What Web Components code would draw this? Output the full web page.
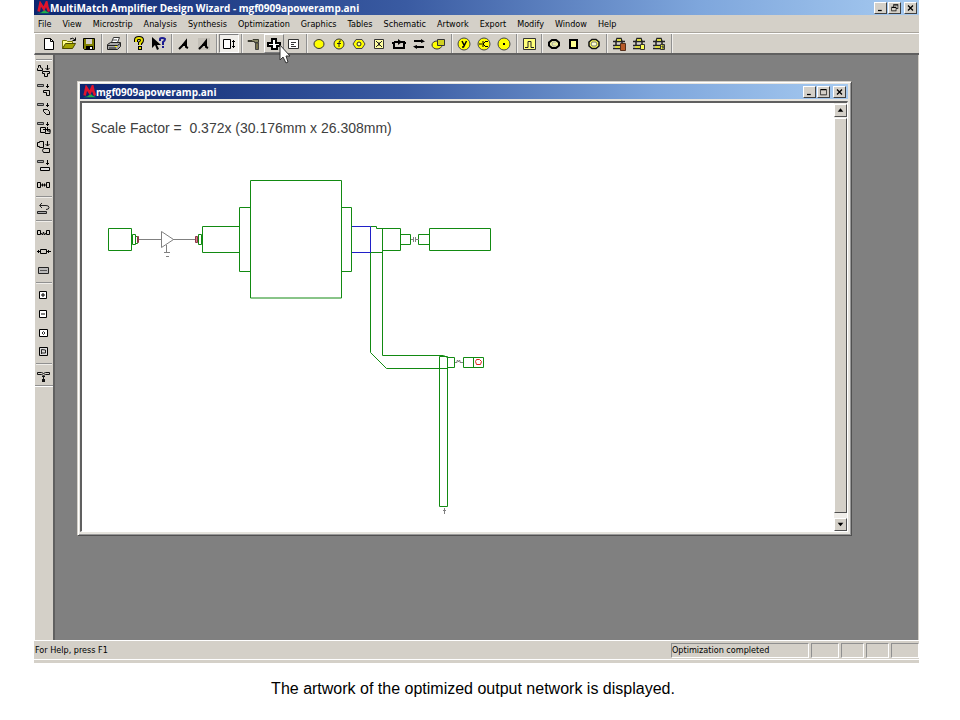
<!DOCTYPE html>
<html lang="en">
<head>
<meta charset="utf-8">
<title>MultiMatch Amplifier Design Wizard</title>
<style>
  body {
    margin: 0;
    background: #fff;
    color: #000;
    font-family: "DejaVu Sans Condensed", "DejaVu Sans", sans-serif;
    font-size: 9px;
  }
</style>
</head>
<body>
<design-wizard></design-wizard>

<script>
const ICONS = {
  logo: `<path d="M1 14l5-1 4-3 2 2 4 2z" fill="#1fb04a"/><path d="M3 12L5 3l4 6 3-7 1 5 2 5" fill="none" stroke="#e0142c" stroke-width="3"/>`,
  file: `<path d="M3.500 2.500h6l3 3v8h-9z" fill="#fff" stroke="#000"/><path d="M9.500 2.500v3h3" fill="none" stroke="#000"/>`,
  open: `<path d="M1.500 12.500v-8h4l1 1h5v2" fill="#ffff8c" stroke="#7a7a00"/><path d="M1.500 12.500l3-5h10l-3 5z" fill="#a5a500" stroke="#4a4a00"/><path d="M9 3q3-2 5 1M14.500 1.500v3h-3" fill="none" stroke="#000"/>`,
  save: `<path d="M2.500 2.500h11v11h-10l-1-1z" fill="#808000" stroke="#000"/><path d="M5 3h6v5H5z" fill="#d4d0c8"/><path d="M5 10h7v4H5z" fill="#000"/><path d="M9 11h2v2H9z" fill="#fff"/>`,
  print: `<path d="M5.500 6.500l2-5h6l-2 5z" fill="#fff" stroke="#333"/><path d="M7 4h4" stroke="#555"/><path d="M1.500 8.500l3-2h10v4l-3 3h-10z" fill="#a8a8a8" stroke="#222"/><path d="M2 9.500h9.500l2.500-2M3 12h7" fill="none" stroke="#222"/><path d="M9 10h2v1H9z" fill="#ff0"/>`,
  help: `<path d="M5 6V4q0-2 3-2t3 2q0 2-2 3v2" fill="none" stroke="#000" stroke-width="4"/><path d="M7 10h4v4H7z" fill="#000"/><path d="M5 6V4q0-2 3-2t3 2q0 2-2 3v2" fill="none" stroke="#e8e000" stroke-width="2"/><path d="M8 11h2v2H8z" fill="#e8e000"/>`,
  pointer: `<path d="M1 1v11l3-3 2 5 2-1-2-4h4z" fill="#000"/><path d="M9 5V3q0-1 2-1t3 1q0 2-2 3v3M12 10v2" fill="none" stroke="#1c1c90" stroke-width="2"/>`,
  analyse: `<path d="M3 13l3-3 4-5v6l2 1M6 9h5" fill="none" stroke="#000" stroke-width="2"/>`,
  analyseAll: `<path d="M2 2h12v12H2z" fill="#c4c0b8"/><path d="M3 13l3-3 4-5v6l2 1M6 9h5" fill="none" stroke="#000" stroke-width="2"/>`,
  sizing: `<path d="M2.500 3.500h7v9h-7z" fill="#fff" stroke="#000"/><path d="M12.500 4v8M11 5.500h3M11 10.500h3" stroke="#000"/>`,
  hammer: `<path d="M2 4.500h4l1-1h5.500v3h-4v-1H2z" fill="#8a8a68" stroke="#3a3a30"/><path d="M9.500 7h3v6.500h-3z" fill="#77734d" stroke="#444"/>`,
  plus: `<path d="M6 3h4v4h4v3h-3v3H6v-3H2V7h4z" fill="#fff" stroke="#000" stroke-width="2"/>`,
  list: `<path d="M2.500 3.500h10v9h-10z" fill="#fff" stroke="#333"/><path d="M5 6.500h5M5 8.500h3M5 10.500h5" stroke="#333"/>`,
  oval: `<ellipse cx="8" cy="8" rx="5" ry="4.500" fill="#ff0" stroke="#333"/>`,
  ovalF: `<circle cx="8" cy="8" r="5" fill="#ff0" stroke="#333"/><path d="M10 5q-2-1-2 2v4M6 7.500h4" fill="none" stroke="#222"/>`,
  ovalO: `<path d="M5 3.500h6l3 4.500-3 4.500H5L2 8z" fill="#ff0" stroke="#444"/><circle cx="8" cy="8" r="2" fill="#ffa" stroke="#222"/>`,
  crossBox: `<path d="M3.500 3.500h9v9h-9z" fill="#ffffa0" stroke="#333"/><path d="M5 5l6 6M11 5l-6 6M8 6v4" stroke="#222"/>`,
  bracket: `<path d="M3 6v6h10V6H3M1 7h2M13 7h2" fill="none" stroke="#000" stroke-width="2"/><path d="M7 3l4 3-4 3z" fill="#000"/>`,
  swap: `<path d="M3 5h9M4 11h9" stroke="#000" stroke-width="2"/><path d="M10 3l4 2.500L10 7zM6 9l-4 1.500L6 13z" fill="#000"/>`,
  stack: `<ellipse cx="6" cy="9" rx="5" ry="4" fill="#ff0" stroke="#333"/><path d="M6.500 3.500h7v6h-7z" fill="#d0d020" stroke="#333"/>`,
  ovalY: `<circle cx="8" cy="8" r="6" fill="#ff0" stroke="#444"/><path d="M6 5l2 4M10.500 5l-3 6H6" stroke="#000" stroke-width="1.500" fill="none"/>`,
  ovalK: `<circle cx="8" cy="8" r="6" fill="#ff0" stroke="#444"/><path d="M3 8h3M10 5L7 8l3 3M7 5v6M10 5.500h2M10 10.500h2" stroke="#000" fill="none"/>`,
  ovalDot: `<circle cx="8" cy="8" r="6" fill="#ff0" stroke="#444"/><path d="M7 7h2v2H7z" fill="#000"/>`,
  pulse: `<path d="M2.500 2.500h12v11h-12z" fill="#ffff78" stroke="#333"/><path d="M4 11.500h3v-6h3v6h3" fill="none" stroke="#222"/>`,
  ringC: `<path d="M6 4h4l3 2.500v3L10 12H6L3 9.500v-3z" fill="#eef0a0" stroke="#000" stroke-width="2"/><path d="M10 6q-4-1-4 2t4 2" fill="none" stroke="#aaa"/>`,
  ringBox: `<path d="M4 4h7v8H4z" fill="#ffff90" stroke="#000" stroke-width="2"/>`,
  ringO: `<path d="M6 3.500h4l3 2.500v4l-3 2.500H6L3 10V6z" fill="#ff5" stroke="#111" stroke-width="1.500"/><path d="M6 6h4l1 2-1 2H6L5 8z" fill="#ffc" stroke="#777"/>`,
  chipA: `<path d="M5 5.500l1-3h4l1 3M2 5.500h12M5 6v3M11 6v2M2 9.500h7M2 12.500h7" fill="none" stroke="#222" stroke-width="1.500"/><path d="M6 3h4v2H6zM4 10h5v2H4z" fill="#d8d840"/><path d="M9.500 7.500h5v7h-5z" fill="#b85a28" stroke="#55301c"/>`,
  chipB: `<path d="M5 5.500l1-3h4l1 3M2 5.500h12M5 6v3M11 6v2M2 9.500h7M2 12.500h7" fill="none" stroke="#222" stroke-width="1.500"/><path d="M6 3h4v2H6zM4 10h5v2H4z" fill="#d8d840"/><path d="M9.500 8.500h4v5h-4z" fill="#ff5" stroke="#333"/>`,
  chipC: `<path d="M5 5.500l1-3h4l1 3M2 5.500h12M5 6v3M11 6v2M2 9.500h7M2 12.500h7" fill="none" stroke="#222" stroke-width="1.500"/><path d="M6 3h4v2H6zM4 10h5v2H4z" fill="#d8d840"/><path d="M9.500 8.500h4v5h-4z" fill="#ee3" stroke="#333"/><path d="M13 10h-2v1h2v1h-2" fill="none" stroke="#444"/>`,

  addStub: `<path d="M1.500 7.500v-2l1-1v-2h2v2l2 1v2z" fill="none" stroke="#000"/><path d="M11.500 2v5M9.500 5l2 2 2-2M6.500 8.500h7v2h-2v3h-3v-3h-2z" fill="none" stroke="#000"/>`,
  addBend: `<path d="M1.500 2.500h6v2h-6z" fill="#aaa" stroke="#333"/><path d="M11.500 2v4M10 4.500h3M7.500 8.500h6v5h-3v-3h-3z" fill="none" stroke="#000"/>`,
  addCurve: `<path d="M1.500 2.500h6v2h-6z" fill="#aaa" stroke="#333"/><path d="M11.500 2v4M10 4.500h3M7.500 8.500h4l2 2v3h-3l-3-3z" fill="none" stroke="#000"/>`,
  addStep: `<path d="M1.500 2.500h6v2h-6z" fill="#aaa" stroke="#333"/><path d="M11.500 2v4M10 4.500h3M4.500 7.500h5v5h-5zM7 9.500h7v4H9M11.500 7v4h3" fill="none" stroke="#000"/>`,
  addTee: `<path d="M3.500 2.500h4v6h-4v-1h-2v-4h2zM7.500 9.500l-1 2 1 2h6v-4z" fill="none" stroke="#000"/><path d="M11.500 2v5M9.500 5l2 2 2-2" fill="none" stroke="#000"/>`,
  addLine: `<path d="M1.500 2.500h6v2h-6z" fill="#aaa" stroke="#333"/><path d="M11.500 2v5M10 5.500h3" stroke="#000"/><path d="M4.500 9.500h9v3h-9z" fill="#ddd" stroke="#000"/>`,
  link: `<path d="M1.500 5.500h3v5h-3zM10.500 5.500h3v5h-3zM5 8h5M6.500 6.500v3M8.500 6.500v3" fill="none" stroke="#000"/>`,
  undo: `<path d="M4 4.500h6q3 0 3 2t-3 2M6 2L3.500 4.500 6 7" fill="none" stroke="#222"/><path d="M1.500 10.500h9v2h-9z" fill="#aaa" stroke="#222"/>`,
  coil: `<path d="M1.500 5.500h3v4h-3zM10.500 5.500h3v4h-3zM5 8l1.500 2L7.500 7l1 3L10 8" fill="none" stroke="#000"/>`,
  insert: `<path d="M1 7.500h4M11 7.500h4M2.500 6v3M12.500 6v3M4.500 5.500h6v4h-6z" fill="none" stroke="#000"/>`,
  strip: `<path d="M2.500 4.500h10v6h-10z" fill="#bbb" stroke="#222"/><path d="M4 7.500h7" stroke="#555"/>`,
  boxPlus: `<path d="M3.500 4.500h7v7h-7z" fill="#fff" stroke="#000"/><path d="M5 8h4M7 6v4" stroke="#000"/>`,
  boxMinus: `<path d="M3.500 4.500h7v7h-7z" fill="#fff" stroke="#000"/><path d="M5 8h4" stroke="#000"/>`,
  boxDot: `<path d="M3.500 4.500h8v7h-8z" fill="#fff" stroke="#000"/><path d="M6 8l1.500-1.500L9 8 7.500 9.500z" fill="none" stroke="#333"/>`,
  boxFlag: `<path d="M3.500 3.500h8v8h-8z" fill="#ddd" stroke="#000"/><path d="M5.500 10V5.500l4 .5v3H6" fill="none" stroke="#222"/>`,
  pin: `<path d="M1.500 4.500h4l2 1 2-1h4v2h-4l-2 1-2-1h-4zM7.500 8v5M6 8.500h3M6 11.500h3" fill="none" stroke="#111"/><path d="M6 12h3v2H6z" fill="#111"/>`,

  minimize: `<path d="M4 11h6v2H4z"/>`,
  maximize: `<path d="M3 3h10v10H3zM4 5v7h8V5z" fill-rule="evenodd"/>`,
  restore: `<path d="M6 2h8v7h-3v4H3V6h3zM7 4v2h4v2h2V4zM4 8v4h6V8z" fill-rule="evenodd"/>`,
  close: `<path d="M4 4l8 8M12 4l-8 8" stroke="#000" stroke-width="2"/>`,
  up: `<path d="M8 4l5 6H3z"/>`,
  down: `<path d="M8 11l5-6H3z"/>`,
};

const icon = (name) => `<svg viewBox="0 0 16 16" aria-hidden="true">${ICONS[name]}</svg>`;

const MENUS = ["File", "View", "Microstrip", "Analysis", "Synthesis", "Optimization", "Graphics",
  "Tables", "Schematic", "Artwork", "Export", "Modify", "Window", "Help"];

// "|" stands for a separator
const MAIN_TOOLS = ["file", "open", "save", "|", "print", "|", "help", "pointer", "|", "analyse", "analyseAll",
  "|", "sizing", "|", "hammer", "plus", "list", "|", "oval", "ovalF", "ovalO", "crossBox", "bracket", "swap",
  "stack", "|", "ovalY", "ovalK", "ovalDot", "|", "pulse", "|", "ringC", "ringBox", "ringO", "|", "chipA",
  "chipB", "chipC", "|"];
const SIDE_TOOLS = ["addStub", "addBend", "addCurve", "addStep", "addTee", "addLine", "link", "|", "undo", "|",
  "coil", "insert", "strip", "|", "boxPlus", "boxMinus", "boxDot", "boxFlag", "|", "pin"];

class BaseElement extends HTMLElement {
  connectedCallback() {
    if (this.shadowRoot) return;
    this.attachShadow({ mode: "open" });
    this.shadowRoot.innerHTML = `
      <style>
        *, *::before, *::after { box-sizing: border-box; }
        :host { box-sizing: border-box; }
        button { font: inherit; color: inherit; border: 0; padding: 0; margin: 0; background: none; }
        svg { display: block; }
      </style>
      ${this.render()}`;
  }
}

class TitleBar extends BaseElement {
  render() {
    const middle = this.getAttribute("middle");
    return `
      <style>
        :host {
          display: flex;
          align-items: center;
          height: 15px;
          padding: 0 2px;
          background: linear-gradient(90deg, #0c2670, #3a5ba2 42%, #7ea6dc 75%, #a6caf0);
          color: #fff;
          font: bold 10px/14px "Open Sans", "Noto Sans", sans-serif;
        }
        .logo { width: 14px; height: 14px; flex: none; }
        .text { flex: 1; white-space: nowrap; overflow: hidden; }
        .buttons { display: flex; gap: 1px; }
        .buttons button {
          width: 13px;
          height: 12px;
          display: grid;
          place-items: center;
          background: #d4d0c8;
          border: 1px solid;
          border-color: #fff #404040 #404040 #fff;
        }
        .buttons button:last-child { margin-left: 2px; }
        .buttons svg { width: 11px; height: 10px; }
      </style>
      <svg class="logo" viewBox="0 0 16 16" aria-hidden="true">${ICONS.logo}</svg>
      <span class="text"><slot></slot></span>
      <span class="buttons">
        <button aria-label="Minimize">${icon("minimize")}</button>
        <button aria-label="${middle}">${icon(middle)}</button>
        <button aria-label="Close">${icon("close")}</button>
      </span>`;
  }
}

class MenuBar extends BaseElement {
  render() {
    return `
      <style>
        :host {
          display: flex;
          gap: 11px;
          height: 18px;
          padding: 0 4px;
          background: #d4d0c8;
          border-bottom: 1px solid #a8a49c;
        }
      </style>
      ${MENUS.map((m) => `<button>${m}</button>`).join("")}`;
  }
}

class ToolButton extends BaseElement {
  render() {
    return `
      <style>
        :host { display: block; width: 20px; height: 19px; flex: none; }
        button { width: 100%; height: 100%; display: flex; align-items: center; justify-content: center; }
        svg { width: 16px; height: 16px; flex: none; }
        :host([state]) button { border: 1px solid; }
        :host([state="pressed"]) button { background: #f0eeea; border-color: #808080 #fff #fff #808080; }
        :host([state="hover"]) button { border-color: #fff #808080 #808080 #fff; }
      </style>
      <button aria-label="${this.getAttribute("icon")}">${icon(this.getAttribute("icon"))}</button>`;
  }
}

class ToolBar extends BaseElement {
  render() {
    const side = this.hasAttribute("vertical");
    const states = { sizing: "pressed", plus: "hover" };
    const tools = (side ? SIDE_TOOLS : MAIN_TOOLS).map((t) => {
      if (t === "|") return `<i></i>`;
      const state = states[t] ? `state="${states[t]}"` : "";
      const button = `<tool-button icon="${t}" ${state}></tool-button>`;
      return t === "plus" ? `<span class="hot">${button}<mouse-cursor></mouse-cursor></span>` : button;
    });
    return `
      <style>
        :host {
          display: flex;
          align-items: center;
          height: 22px;
          padding-left: 4px;
          background: #d4d0c8;
          border-top: 1px solid #fff;
          border-bottom: 2px solid #606060;
          border-left: 1px solid #fff;
        }
        i { width: 5px; height: 19px; flex: none; display: grid; place-items: center; }
        i::before { content: ""; width: 2px; height: 100%; border-left: 1px solid #909090; border-right: 1px solid #f0eeea; }
        .hot { position: relative; }
        mouse-cursor { position: absolute; left: 15px; top: 10px; z-index: 2; }
        :host([vertical]) {
          flex-direction: column;
          width: 21px;
          height: auto;
          padding: 4px 0 0;
          border-top: 0;
          border-bottom: 0;
          border-right: 2px solid #606060;
        }
        :host([vertical])::before { content: ""; width: 16px; height: 2px; border-top: 1px solid #909090; background: #fff; }
        :host([vertical]) i { width: 16px; height: 5px; }
        :host([vertical]) i::before { width: 100%; height: 2px; border: 0; border-top: 1px solid #909090; background: #f0eeea; }
        .end { width: 18px; height: 2px; border-top: 1px solid #909090; background: #fff; }
      </style>
      ${tools.join("")}
      ${side ? `<div class="end"></div>` : ""}`;
  }
}

class MouseCursor extends BaseElement {
  render() {
    return `
      <style>:host { display: block; } svg { width: 12px; height: 20px; }</style>
      <svg viewBox="0 0 12 20" aria-hidden="true">
        <path d="M1 1v15l3-3 3 6 2-1-2-6h4z" fill="#fff" stroke="#333"/>
      </svg>`;
  }
}

class ArtworkView extends BaseElement {
  render() {
    return `
      <style>
        :host { display: block; flex: 1; background: #fff; padding: 16px 9px 0; overflow: hidden; }
        p {
          margin: 0;
          font: 14px/18px "Liberation Sans", Arial, sans-serif;
          color: #404040;
          white-space: pre;
        }
        svg { width: 400px; height: 350px; margin: 34px 0 0 9px; }
        path { fill: none; stroke: #128a12; }
        .blue { stroke: #2020c8; }
        .gray { stroke: #808080; }
        .red { stroke: #e02020; }
        .pad { stroke: #8c3848; fill: #d88090; }
      </style>
      <p>Scale Factor =  0.372x (30.176mm x 26.308mm)</p>
      <svg viewBox="100 171 400 350" role="img" aria-label="Output network artwork">
        <!-- source line and transistor -->
        <path d="M108.500 228.500h23v22h-23zM132.500 234.500h3v10h-3zM135.500 236.500h2v7h-2z"/>
        <path class="pad" d="M137.500 236.500h1v6h-1z"/>
        <path class="gray" d="M139 239.500h22M173 239.500h22M161.500 231.500v16l12-8zM166.500 245v7M164 252.500h6M166 256.500h3"/>
        <path class="pad" d="M195.500 236.500h2v6h-2z"/>
        <path d="M198.500 234.500h3v10h-3z"/>
        <!-- low impedance sections -->
        <path d="M202.500 226.500h36.500M202.500 226.500v26h36.500M239.500 207.500h11v64h-11zM250.500 180.500h91v117.500h-91zM341.500 207.500h10v64h-10z"/>
        <!-- bias branch -->
        <path d="M370.500 252v100.500l16 16h61M382.500 228v127.500h61l4 2M370.500 226.500h6v2h6M370.500 252.500h12"/>
        <path class="blue" d="M352 226.500h18.500v26h-18.500"/>
        <path d="M439.500 356.500h8v150h-8zM447.500 357.500h7v10h-7zM463.500 357.500h20v10h-20zM473.500 357.500v10"/>
        <path class="gray" d="M455 362.500h2v-2h1v1h1v-1h1v2h3M444.500 508v2M443 510.500h3M444.500 511v3"/>
        <path class="red" d="M476.500 359.500h3l2 2-1 3h-4l-1-3z"/>
        <!-- output line -->
        <path d="M382.500 228.500h18v22h-18M400.500 234.500h10v10h-10M418.500 234.500h11v10h-11zM429.500 228.500h61v22h-61z"/>
        <path class="gray" d="M411 239.500h3M416 239.500h3M413.500 237v5M415.500 237v5"/>
      </svg>`;
  }
}

class ScrollBar extends BaseElement {
  render() {
    return `
      <style>
        :host { display: flex; flex-direction: column; gap: 1px; width: 13px; padding-top: 1px; background: #f0eeea; }
        button, .thumb {
          background: #d4d0c8;
          border: 1px solid;
          border-color: #fff #505050 #505050 #fff;
        }
        button { height: 13px; display: grid; place-items: center; }
        svg { width: 9px; height: 9px; }
        .thumb { flex: 1; margin-bottom: 4px; }
      </style>
      <button aria-label="Scroll up">${icon("up")}</button>
      <div class="thumb"></div>
      <button aria-label="Scroll down">${icon("down")}</button>`;
  }
}

class ChildWindow extends BaseElement {
  render() {
    return `
      <style>
        :host {
          display: flex;
          flex-direction: column;
          flex: 1;
          background: #e6e4de;
          border: 1px solid;
          border-color: #d4d0c8 #505050 #505050 #d4d0c8;
          box-shadow: inset 1px 1px #fff, inset -1px -1px #999;
          padding: 2px 3px 3px 2px;
        }
        .client {
          flex: 1;
          display: flex;
          margin-top: 2px;
          border: solid;
          border-width: 2px 1px 1px 2px;
          border-color: #606060 #fff #fff #606060;
        }
      </style>
      <title-bar middle="maximize">mgf0909apoweramp.ani</title-bar>
      <div class="client"><slot></slot></div>`;
  }
}

class StatusBar extends BaseElement {
  render() {
    return `
      <style>
        :host {
          display: flex;
          flex-direction: column;
          gap: 1px;
          height: 23px;
          padding: 2px 0 0;
          background: #d4d0c8;
          border-top: 1px solid #fff;
          line-height: 14px;
        }
        .row { display: flex; gap: 2px; height: 15px; }
        .rule { height: 1px; background: #fff; }
        .message { flex: 1; padding-left: 1px; }
        .pane { width: 23px; border: 1px solid; border-color: #909090 #fff #fff #909090; line-height: 13px; }
        .result { width: 138px; }
        .lamp { width: 28px; }
      </style>
      <div class="row">
        <span class="message">For Help, press F1</span>
        <span class="pane result">Optimization completed</span>
        <span class="pane lamp"></span>
        <span class="pane"></span>
        <span class="pane"></span>
        <span class="pane lamp"></span>
      </div>
      <div class="rule"></div>`;
  }
}

class DesignWizard extends BaseElement {
  render() {
    return `
      <style>
        :host { display: flex; flex-direction: column; min-height: 100vh; }
        .app { flex: 1; display: flex; flex-direction: column; margin: 0 41px 0 34px; }
        .main { flex: 1; display: flex; }
        .workspace {
          flex: 1;
          display: flex;
          padding: 26px 66px 104px 22px;
          background: #808080;
          border-right: 1px solid #d4d0c8;
        }
        .caption {
          margin: 0 14px 0 0;
          height: 57px;
          padding-top: 17px;
          text-align: center;
          font: 16px/18px "Liberation Sans", Arial, sans-serif;
        }
      </style>
      <div class="app">
        <title-bar middle="restore">MultiMatch Amplifier Design Wizard - mgf0909apoweramp.ani</title-bar>
        <menu-bar></menu-bar>
        <tool-bar></tool-bar>
        <div class="main">
          <tool-bar vertical></tool-bar>
          <div class="workspace">
            <child-window>
              <artwork-view></artwork-view>
              <scroll-bar></scroll-bar>
            </child-window>
          </div>
        </div>
        <status-bar></status-bar>
      </div>
      <p class="caption">The artwork of the optimized output network is displayed.</p>`;
  }
}

customElements.define("title-bar", TitleBar);
customElements.define("menu-bar", MenuBar);
customElements.define("tool-button", ToolButton);
customElements.define("mouse-cursor", MouseCursor);
customElements.define("tool-bar", ToolBar);
customElements.define("artwork-view", ArtworkView);
customElements.define("scroll-bar", ScrollBar);
customElements.define("child-window", ChildWindow);
customElements.define("status-bar", StatusBar);
customElements.define("design-wizard", DesignWizard);
</script>
</body>
</html>
